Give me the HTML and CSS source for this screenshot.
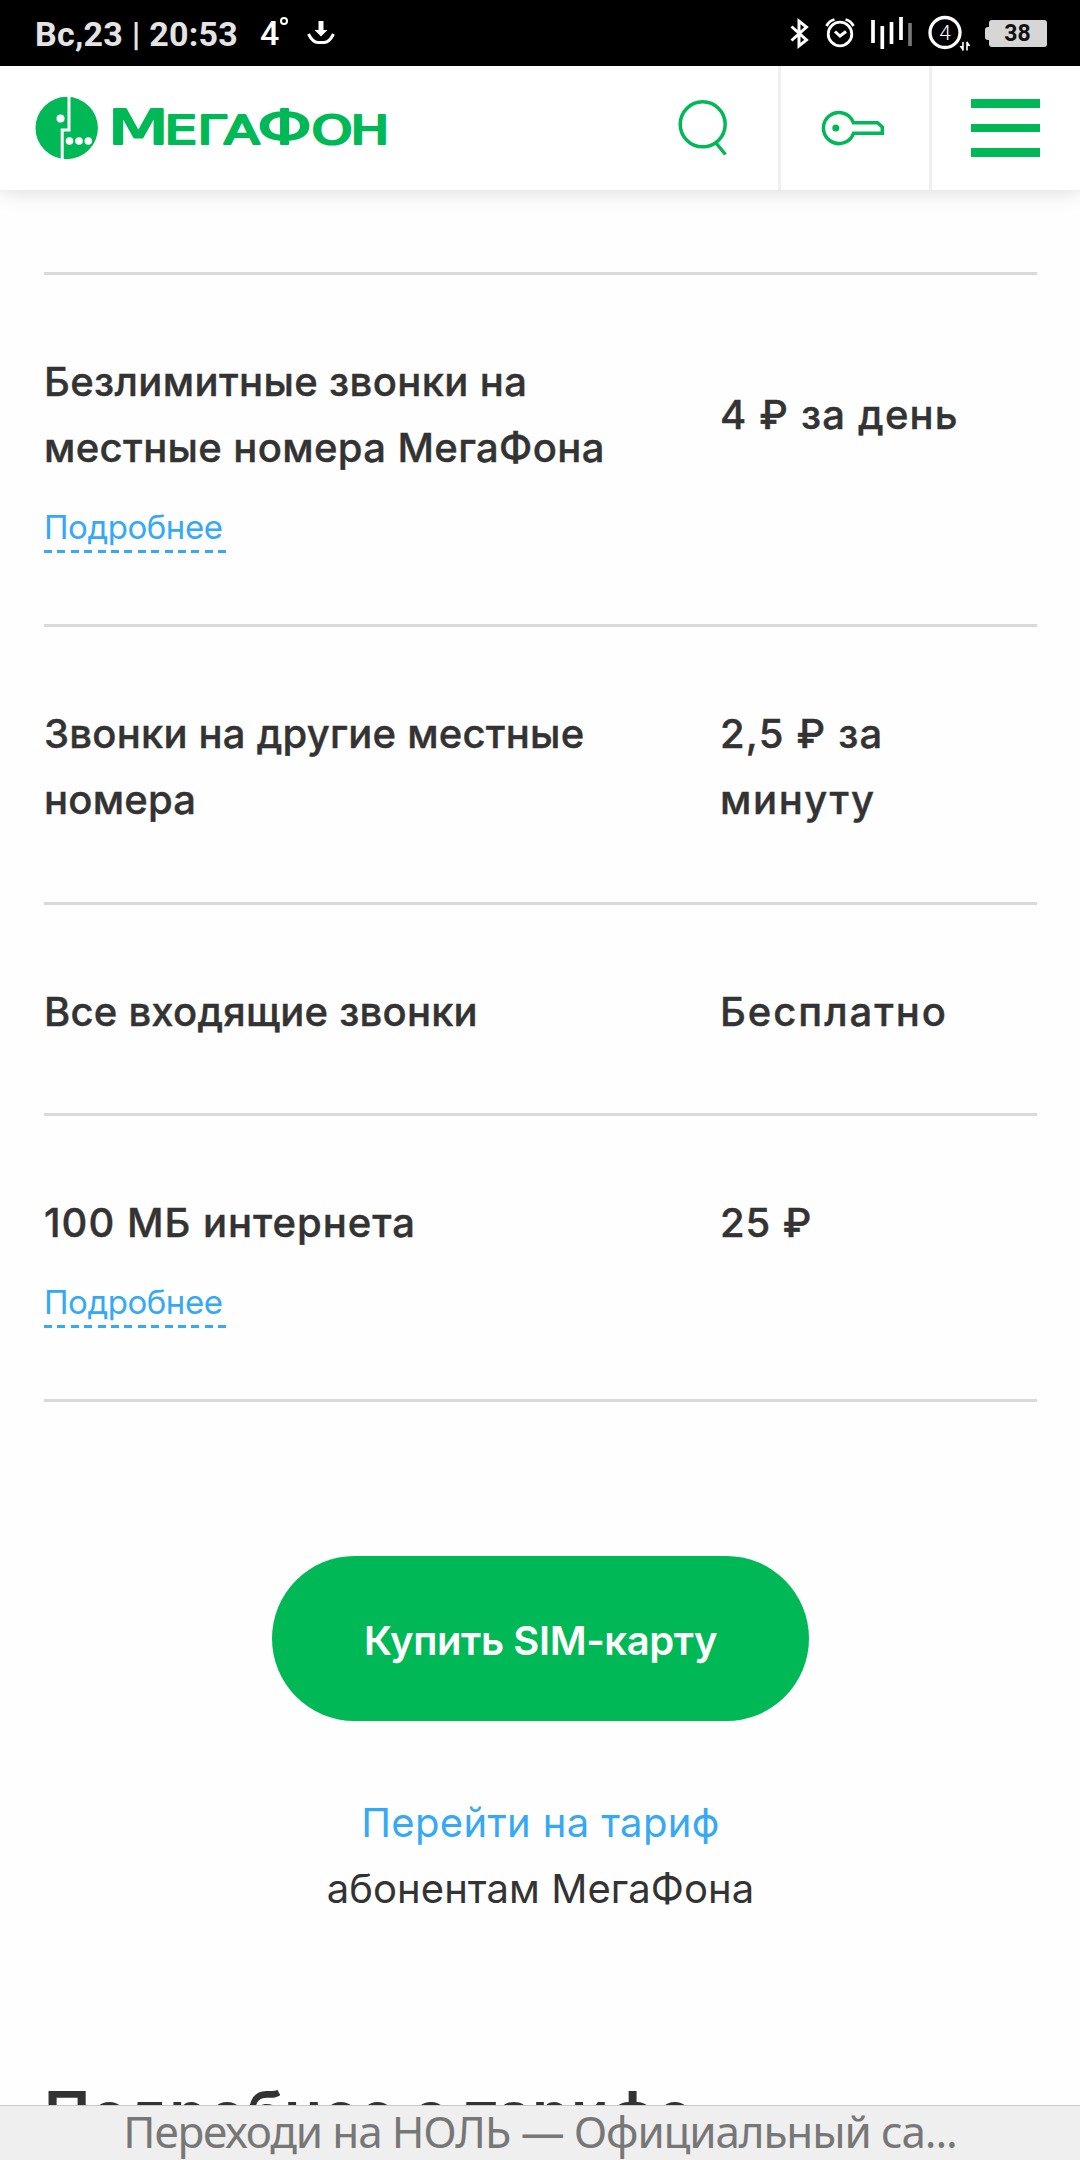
FILE: index.html
```html
<!DOCTYPE html>
<html lang="ru">
<head>
<meta charset="utf-8">
<title>МегаФон — тариф</title>
<link rel="stylesheet" href="styles.css">
</head>
<body>
<div class="screen">
  <div class="status">
    <span class="clock">Вс,23 | 20:53</span>
    <span class="temp">4<i class="degree"></i></span>
    <svg class="download" width="28" height="26" viewBox="0 0 28 26"><path d="M14 1v11" stroke="#fff" stroke-width="5" fill="none"/><path d="M7.500 10h13l-6.500 6.500z" fill="#fff"/><path d="M1.500 14C4 19 8 22.500 11 22.500h6c3 0 7-3.500 9.500-8.500" stroke="#fff" stroke-width="3" fill="none"/></svg>
    <svg class="indicators" width="264" height="66" viewBox="788 0 264 66" fill="none" stroke="#fff">
      <path d="M791.500 26.500l15 13.500-7.500 6V21l7.500 6-15 13.500" stroke-width="3"/>
      <circle cx="840" cy="34" r="11.800" stroke-width="2.800"/><path d="M835 31.500l5 4.500 6-4.500" stroke-width="3"/><path d="M826.500 26c1.500-3 4-5.500 8-6.500M853.500 26c-1.500-3-4-5.500-8-6.500" stroke-width="2.800"/>
      <path d="M873 20v23M882.300 26v23M891.500 22v22M901 17v23" stroke-width="3.700"/><path d="M910 23v23" stroke="#777" stroke-width="3.700"/>
      <circle cx="945" cy="32.500" r="15" stroke-width="3.300"/>
      <text x="945" y="40" text-anchor="middle" class="slot">4</text>
      <path d="M963 42v8.500M967 42v8.500" stroke-width="1.600"/><path d="M963 51l-3.500-5h3.500zM967 41l3.500 5H967z" fill="#fff" stroke="none"/>
      <path d="M992 20h52q3 0 3 3v21q0 3-3 3h-52q-3 0-3-3v-4h-1q-3 0-3-3v-7q0-3 3-3h1v-4q0-3 3-3z" fill="#d6d6d6" stroke="none"/>
      <text x="1017.500" y="41" text-anchor="middle" class="charge">38</text>
    </svg>
  </div>
  <header class="header">
    <svg class="logo" width="360" height="124" viewBox="30 66 360 124">
      <circle cx="66.700" cy="128" r="31.200" fill="#00b956"/>
      <path d="M69 96v34h-6.800v30" fill="none" stroke="#fff" stroke-width="3"/>
      <g fill="#fff"><circle cx="60.500" cy="118.500" r="4"/><circle cx="69.500" cy="141" r="3.800"/><circle cx="79" cy="141" r="3.800"/><circle cx="88.300" cy="141" r="3.800"/></g>
      <g class="wordmark">
        <text class="big" x="72.300" y="144" transform="scale(1.49 1)">М</text>
        <text y="144" transform="scale(1.32 1)"><tspan x="124.500 149.500 169.700">ЕГА</tspan><tspan x="195" class="big">Ф</tspan><tspan x="236 265.400">ОН</tspan></text>
      </g>
    </svg>
    <nav class="tools">
      <a class="tool search"><svg width="60" height="70" viewBox="673 93 60 70" fill="none" stroke="#00b956" stroke-width="3.500"><circle cx="702.700" cy="124.300" r="22.500"/><path d="M716 143l9.500 11.500"/></svg></a>
      <a class="tool key"><svg width="70" height="50" viewBox="820 103 70 50" fill="none" stroke="#00b956" stroke-width="3.500"><path d="M854.500 122.800A15.500 15.500 0 1 0 854.500 133.300H883.300V127L878.500 122.800Z"/><circle cx="836.800" cy="128" r="3.500" fill="#00b956" stroke="none"/></svg></a>
      <a class="tool menu"><i></i><i></i><i></i></a>
    </nav>
  </header>
  <main class="content">
    <section class="row row-calls">
      <div class="name">Безлимитные звонки на<br>местные номера МегаФона</div>
      <div class="price">4 ₽ за день</div>
      <a class="more">Подробнее</a>
    </section>
    <section class="row row-other">
      <div class="name">Звонки на другие местные<br>номера</div>
      <div class="price">2,5 ₽ за<br><span class="unit">минуту</span></div>
    </section>
    <section class="row row-incoming">
      <div class="name">Все входящие звонки</div>
      <div class="price free">Бесплатно</div>
    </section>
    <section class="row row-internet">
      <div class="name">100 МБ интернета</div>
      <div class="price">25 ₽</div>
      <a class="more">Подробнее</a>
    </section>
    <div class="actions">
      <a class="buy">Купить SIM-карту</a>
      <a class="switch">Перейти на тариф</a>
      <div class="note">абонентам МегаФона</div>
    </div>
    <h2 class="heading">Подробнее о тарифе</h2>
  </main>
  <footer class="pagebar">Переходи на НОЛЬ — Официальный са...</footer>
</div>
</body>
</html>
```
FILE: styles.css
```css
* { box-sizing: border-box; }
body { margin: 0; background: #fff; color: #333; font-family: Inter, "Noto Sans", sans-serif; }
.screen { width: 1080px; height: 2160px; display: flex; flex-direction: column; overflow: hidden; background: #fefefe; }

.status { flex: none; height: 66px; background: #000; display: flex; align-items: center; padding-left: 35px; color: #e4e4e4; font-family: Roboto, sans-serif; }
.clock { font-size: 34px; font-weight: 700; letter-spacing: .24px; white-space: pre; line-height: 66px; padding-top: 2px; }
.temp { color: #fff; font-size: 34px; font-weight: 500; margin-left: 22px; display: flex; }
.degree { width: 8px; height: 8px; border: 2px solid #fff; border-radius: 50%; margin: 4px 0 0 1px; }
.download { margin-left: 19px; }
.indicators { margin-left: auto; margin-right: 28px; }
.slot { font: 300 21px Roboto, sans-serif; fill: #fff; stroke: none; }
.charge { font: 700 23px Roboto, sans-serif; fill: #111; stroke: none; }

.header { flex: none; height: 124px; display: flex; justify-content: space-between; background: #fff; box-shadow: 0 0 22px rgba(0,0,0,.16); padding-left: 30px; position: relative; }
.wordmark { font: 400 39.5px "DejaVu Sans", sans-serif; fill: #00b956; stroke: #00b956; stroke-width: 2.2px; stroke-linejoin: round; }
.big { font-size: 47.7px; }
.tools { display: flex; }
.tool { display: flex; align-items: center; justify-content: center; }
.search { width: 152px; padding-right: 2px; border-right: 3px solid #efefef; }
.key { width: 151px; padding-right: 2px; border-right: 3px solid #efefef; }
.menu { width: 148px; padding-right: 2px; flex-direction: column; gap: 16px; }
.menu i { width: 69px; height: 8.7px; background: #00b956; }

.content { flex: 1; min-height: 0; overflow: hidden; padding: 82px 43px 0 44px; display: flex; flex-direction: column; }
.row { flex: none; display: grid; grid-template-columns: 676px 1fr; align-content: start; align-items: center; border-top: 3px solid #dadada; padding-top: 74px; font-size: 40px; font-weight: 500; line-height: 66px; white-space: nowrap; }
.row-calls { height: 352px; }
.row-other { height: 278px; }
.row-incoming { height: 211px; }
.row-internet { height: 289px; border-bottom: 3px solid #dadada; }
.name, .price { -webkit-text-stroke: .4px #333; }
.name { letter-spacing: .37px; }
.row-other .name, .row-incoming .name { letter-spacing: .22px; }
.row-internet .name { letter-spacing: 1px; }
.price { letter-spacing: 1.2px; }
.unit { letter-spacing: 1.6px; }
.free { letter-spacing: 1.96px; }
.row-internet .price { letter-spacing: .9px; }
.more { grid-column: 1; justify-self: start; margin-top: 24px; height: 48px; width: 182px; line-height: 44px; font-size: 33px; font-weight: 400; letter-spacing: -.45px; color: #36a9f4; background: repeating-linear-gradient(90deg, #36a9f4 0 8px, transparent 8px 13.4px) bottom / 100% 3px no-repeat; }

.actions { flex: none; display: flex; flex-direction: column; align-items: center; padding-top: 154px; font-size: 40px; line-height: 66px; }
.buy { width: 537px; height: 165px; border-radius: 83px; background: #00b956; color: #fff; font-weight: 600; letter-spacing: -.4px; display: flex; align-items: center; justify-content: center; padding-top: 4px; }
.switch { margin-top: 69px; color: #36a9f4; font-weight: 400; letter-spacing: .35px; }
.note { font-weight: 400; letter-spacing: .05px; }
.heading { margin: 152px 0 0; font-size: 62px; line-height: 80px; font-weight: 600; letter-spacing: .25px; white-space: nowrap; }

.pagebar { flex: none; height: 55px; border-top: 1px solid #c9c9c9; background: #efefef; color: #777; font: 400 44px/51px "Noto Sans", sans-serif; letter-spacing: -1.15px; text-align: center; white-space: nowrap; }
```
